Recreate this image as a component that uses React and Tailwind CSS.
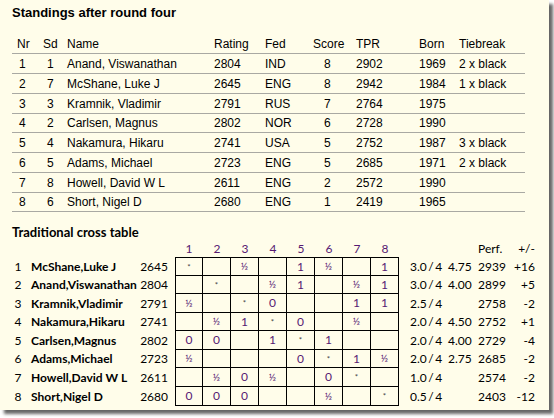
import React from "react";

const standings = [
  ["1", "1", "Anand, Viswanathan", "2804", "IND", "8", "2902", "1969", "2 x black"],
  ["2", "7", "McShane, Luke J", "2645", "ENG", "8", "2942", "1984", "1 x black"],
  ["3", "3", "Kramnik, Vladimir", "2791", "RUS", "7", "2764", "1975", ""],
  ["4", "2", "Carlsen, Magnus", "2802", "NOR", "6", "2728", "1990", ""],
  ["5", "4", "Nakamura, Hikaru", "2741", "USA", "5", "2752", "1987", "3 x black"],
  ["6", "5", "Adams, Michael", "2723", "ENG", "5", "2685", "1971", "2 x black"],
  ["7", "8", "Howell, David W L", "2611", "ENG", "2", "2572", "1990", ""],
  ["8", "6", "Short, Nigel D", "2680", "ENG", "1", "2419", "1965", ""],
];

const cross = [
  ["McShane,Luke J", "2645", ["*", "", "½", "", "1", "½", "", "1"], "3.0 / 4", "4.75", "2939", "+16"],
  ["Anand,Viswanathan", "2804", ["", "*", "", "½", "1", "", "½", "1"], "3.0 / 4", "4.00", "2899", "+5"],
  ["Kramnik,Vladimir", "2791", ["½", "", "*", "0", "", "", "1", "1"], "2.5 / 4", "", "2758", "-2"],
  ["Nakamura,Hikaru", "2741", ["", "½", "1", "*", "0", "", "½", ""], "2.0 / 4", "4.50", "2752", "+1"],
  ["Carlsen,Magnus", "2802", ["0", "0", "", "1", "*", "1", "", ""], "2.0 / 4", "4.00", "2729", "-4"],
  ["Adams,Michael", "2723", ["½", "", "", "", "0", "*", "1", "½"], "2.0 / 4", "2.75", "2685", "-2"],
  ["Howell,David W L", "2611", ["", "½", "0", "½", "", "0", "*", ""], "1.0 / 4", "", "2574", "-2"],
  ["Short,Nigel D", "2680", ["0", "0", "0", "", "", "½", "", "*"], "0.5 / 4", "", "2403", "-12"],
];

// row heights of the cross table (first includes the top border)
const rowH = ["h-[19px]", "h-[18px]", "h-[19px]", "h-[18px]", "h-[19px]", "h-[18px]", "h-[19px]", "h-[19px]"];

const cols = "grid grid-cols-[28px_27px_147px_51px_48px_43px_63px_40px_66px]";

function StandingRow({ r, header, h }) {
  return (
    <div className={`${cols} items-center border-b border-[#a9a9a3] ${h}`}>
      <span className={header ? "pl-[5px]" : "pl-[7px]"}>{r[0]}</span>
      <span className={header ? "pl-[3px]" : "pl-[7px]"}>{r[1]}</span>
      <span>{r[2]}</span>
      <span>{r[3]}</span>
      <span>{r[4]}</span>
      <span className={header ? "" : "pl-[11px]"}>{r[5]}</span>
      <span>{r[6]}</span>
      <span>{r[7]}</span>
      <span>{r[8]}</span>
    </div>
  );
}

function Cell({ v, first, top }) {
  const tone =
    v === "*"
      ? "text-[8px] text-[#444]"
      : v === "½"
      ? "text-[10px] text-[#561a73]"
      : "text-[#561a73]";
  return (
    <div
      className={`w-[28px] flex items-center justify-center border-r border-b border-black ${first ? "border-l" : ""} ${top ? "border-t" : ""} ${tone}`}
    >
      {v}
    </div>
  );
}

const sHeights = ["h-[20px]", "h-[20px]", "h-[20px]", "h-[20px]", "h-[19px]", "h-[20px]", "h-[20px]", "h-[20px]", "h-[19px]"];

export default function App() {
  return (
    <div className="w-[554px] h-[418px] bg-white">
      <div className="w-[549px] h-[410px] bg-[#fffdea] shadow-[4px_4px_3px_rgba(0,0,0,0.6)] pl-[12px] pt-[5px] text-black">
        <div className="font-['Liberation_Sans',Arial,sans-serif] text-[12px]">
          <h1 className="font-bold text-[13px] leading-[16px]">Standings after round four</h1>
          <div className="w-[513px] mt-[13px]">
            <StandingRow header h={sHeights[0]} r={["Nr", "Sd", "Name", "Rating", "Fed", "Score", "TPR", "Born", "Tiebreak"]} />
            {standings.map((r, i) => (
              <StandingRow key={r[0]} r={r} h={sHeights[i + 1]} />
            ))}
          </div>
        </div>

        <div className="font-['Lato',sans-serif] text-[12px] mt-[12px]">
          <h2 className="font-bold text-[13px] leading-[16px]">Traditional cross table</h2>
          <div className="flex h-[17px] items-center">
            <div className="w-[163px]" />
            {[1, 2, 3, 4, 5, 6, 7, 8].map((n) => (
              <span key={n} className="w-[28px] text-center text-[#561a73]">
                {n}
              </span>
            ))}
            <span className="w-[79px]" />
            <span className="w-[32px]">Perf.</span>
            <span className="w-[25px] text-right">+/-</span>
          </div>
          {cross.map((r, i) => (
            <div key={i} className={`flex items-stretch ${rowH[i]}`}>
              <span className="w-[12px] self-center text-center">{i + 1}</span>
              <span className="w-[101px] ml-[7px] self-center font-bold whitespace-nowrap">{r[0]}</span>
              <span className="w-[36px] self-center text-right">{r[1]}</span>
              <div className="ml-[7px] flex">
                {r[2].map((v, j) => (
                  <Cell key={j} v={v} first={j === 0} top={i === 0} />
                ))}
              </div>
              <span className="w-[38px] ml-[11px] self-center whitespace-nowrap [word-spacing:-1.5px]">{r[3]}</span>
              <span className="w-[30px] self-center">{r[4]}</span>
              <span className="w-[32px] self-center">{r[5]}</span>
              <span className="w-[25px] self-center text-right">{r[6]}</span>
            </div>
          ))}
        </div>
      </div>
    </div>
  );
}
